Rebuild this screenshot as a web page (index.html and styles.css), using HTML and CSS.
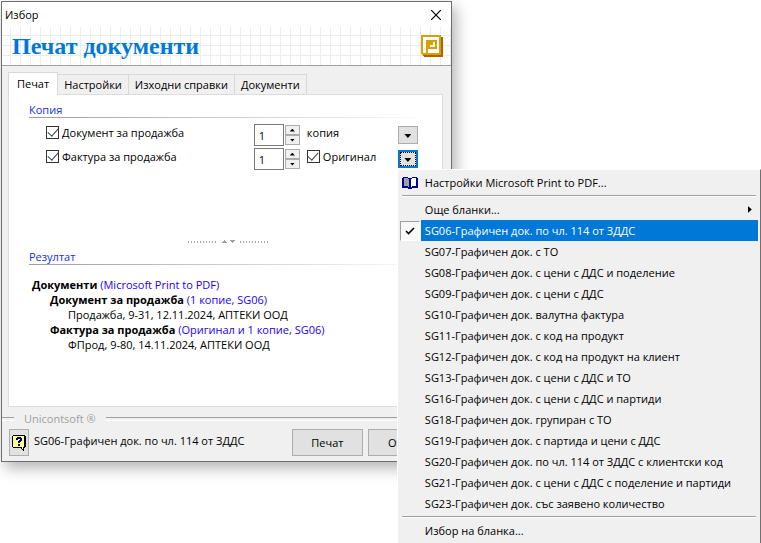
FILE: index.html
```html
<!DOCTYPE html>
<html lang="bg">
<head>
<meta charset="utf-8">
<title>Избор</title>
<link rel="stylesheet" href="styles.css">
</head>
<body>
<main class="dialog">
  <header class="titlebar">
    <span>Избор</span>
    <button class="close" type="button" aria-label="Затвори"><svg width="10" height="10" viewBox="0 0 10 10"><path d="M0 0L10 10M10 0L0 10" stroke="#000" stroke-width="1.2" fill="none"/></svg></button>
  </header>
  <div class="banner">
    <h1>Печат документи</h1>
    <svg width="22" height="22" viewBox="0 0 22 22" shape-rendering="crispEdges"><path d="M2 2H22V22H3L2 20Z" fill="#b06000"/><path d="M0 0H19L20 1V20H1L0 19Z" fill="#d8a000"/><path fill="#fff" d="M2 2H18V18H2Z"/><path fill="#d8a000" d="M5 5H16V14H7V18H5Z"/><path fill="#fff" d="M7 7H14V12H7Z"/><path fill="#d8a000" d="M7 7H12V10H9V12H7Z"/></svg>
  </div>
  <div class="body">
    <nav class="tabs">
      <button class="tab active" type="button">Печат</button>
      <button class="tab" type="button">Настройки</button>
      <button class="tab" type="button">Изходни справки</button>
      <button class="tab" type="button">Документи</button>
    </nav>
    <section class="panel">
      <h2>Копия</h2>
      <div class="copies">
        <div class="row">
          <label class="check doc"><input type="checkbox" checked>Документ за продажба</label>
          <div class="spin">
            <input type="text" value="1" aria-label="Брой копия на документа">
            <span class="arrows"><button type="button" aria-label="Повече"><i class="up"></i></button><button type="button" aria-label="По-малко"><i class="down"></i></button></span>
          </div>
          <span class="kind">копия</span>
          <div class="drop"><button class="dropbtn" type="button" aria-label="Бланка за документа"><i class="arrow"></i></button></div>
        </div>
        <div class="row">
          <label class="check doc"><input type="checkbox" checked>Фактура за продажба</label>
          <div class="spin">
            <input type="text" value="1" aria-label="Брой копия на фактурата">
            <span class="arrows"><button type="button" aria-label="Повече"><i class="up"></i></button><button type="button" aria-label="По-малко"><i class="down"></i></button></span>
          </div>
          <label class="check kind"><input type="checkbox" checked>Оригинал</label>
          <div class="drop">
            <button class="dropbtn focused" type="button" aria-label="Бланка за фактурата"><i class="arrow"></i></button>
            <div class="menu" role="menu">
              <button type="button" role="menuitem"><svg class="lead" width="16" height="12" viewBox="0 0 16 12" shape-rendering="crispEdges"><path d="M1 0H6V1H8V11H6V10H1Z" fill="#a0a0a0"/><path d="M8 1H10V0H15V10H10V11H8Z" fill="#fff"/><path d="M1 0H6V1H10V0H15V1H16V11H10V12H6V11H0V1H1ZM2 1V9H6V10H7V2H6V1ZM10 1V2H9V10H10V9H14V1Z" fill="#0000a0" fill-rule="evenodd"/></svg><span>Настройки Microsoft Print to PDF...</span></button>
              <hr>
              <button type="button" role="menuitem"><span>Още бланки...</span><i class="sub"></i></button>
              <button type="button" role="menuitem" class="selected"><b class="lead tick"><svg width="10" height="8" viewBox="0 0 10 8"><path d="M1 4L3.5 6.5L9 1" fill="none" stroke="#000" stroke-width="1.6"/></svg></b><span>SG06-Графичен док. по чл. 114 от ЗДДС</span></button>
              <button type="button" role="menuitem"><span>SG07-Графичен док. с ТО</span></button>
              <button type="button" role="menuitem"><span>SG08-Графичен док. с цени с ДДС и поделение</span></button>
              <button type="button" role="menuitem"><span>SG09-Графичен док. с цени с ДДС</span></button>
              <button type="button" role="menuitem"><span>SG10-Графичен док. валутна фактура</span></button>
              <button type="button" role="menuitem"><span>SG11-Графичен док. с код на продукт</span></button>
              <button type="button" role="menuitem"><span>SG12-Графичен док. с код на продукт на клиент</span></button>
              <button type="button" role="menuitem"><span>SG13-Графичен док. с цени с ДДС и ТО</span></button>
              <button type="button" role="menuitem"><span>SG16-Графичен док. с цени с ДДС и партиди</span></button>
              <button type="button" role="menuitem"><span>SG18-Графичен док. групиран с ТО</span></button>
              <button type="button" role="menuitem"><span>SG19-Графичен док. с партида и цени с ДДС</span></button>
              <button type="button" role="menuitem"><span>SG20-Графичен док. по чл. 114 от ЗДДС с клиентски код</span></button>
              <button type="button" role="menuitem"><span>SG21-Графичен док. с цени с ДДС с поделение и партиди</span></button>
              <button type="button" role="menuitem"><span>SG23-Графичен док. със заявено количество</span></button>
              <hr>
              <button type="button" role="menuitem"><span>Избор на бланка...</span></button>
            </div>
          </div>
        </div>
      </div>
      <div class="splitter"><i class="dots"></i><svg width="13" height="3" viewBox="0 0 13 3" shape-rendering="crispEdges"><path d="M2 0H3V1H4V2H5V3H0V2H1V1H2ZM8 0H13V1H12V2H11V3H10V2H9V1H8Z" fill="#a0a0a0"/></svg><i class="dots"></i></div>
      <h2>Резултат</h2>
      <ul class="tree">
        <li><b>Документи</b> <em>(Microsoft Print to PDF)</em>
          <ul>
            <li><b>Документ за продажба</b> <em>(1 копие, SG06)</em>
              <ul><li>Продажба, 9-31, 12.11.2024, АПТЕКИ ООД</li></ul>
            </li>
            <li><b>Фактура за продажба</b> <em>(Оригинал и 1 копие, SG06)</em>
              <ul><li>ФПрод, 9-80, 14.11.2024, АПТЕКИ ООД</li></ul>
            </li>
          </ul>
        </li>
      </ul>
    </section>
  </div>
  <div class="brand"><span>Unicontsoft ®</span></div>
  <footer class="actions">
    <button class="btn help" type="button" aria-label="Помощ"><svg width="14" height="16" viewBox="0 0 14 16" shape-rendering="crispEdges"><path d="M1 0H13V1H14V12H13V13H12V16H11V15H10V14H9V13H1V12H0V1H1Z" fill="#000"/><path d="M1 1H12V12H11V14H10V12H1Z" fill="#ffff90"/><path d="M4 3H5V2H9V3H10V6H9V7H8V8H6V6H7V5H8V4H6V5H4ZM6 9H8V11H6Z" fill="#000080"/></svg></button>
    <span class="status">SG06-Графичен док. по чл. 114 от ЗДДС</span>
    <button class="btn" type="button">Печат</button>
    <button class="btn" type="button">Отказ</button>
  </footer>
</main>
</body>
</html>
```
FILE: styles.css
```css
* { box-sizing: border-box; }

body {
  margin: 0;
  padding: 1px;
  min-height: 100vh;
  background: #fff;
  color: #000;
  font: 11px/16px "Open Sans", "Noto Sans", sans-serif;
}

button, input { font: inherit; color: inherit; border-radius: 0; margin: 0; }
button { padding: 0; border: 0; background: none; }
h1, h2, ul { margin: 0; padding: 0; }
ul { list-style: none; }
svg { display: block; }

.dialog {
  width: 59.4%;
  background: #f0f0f0;
  border: 1px solid #6e6e6e;
  box-shadow: 4px 6px 14px rgba(0, 0, 0, .3);
}

.titlebar {
  display: flex;
  align-items: center;
  justify-content: space-between;
  height: 25px;
  padding: 0 10px 0 3px;
  background: #fff;
}

.banner {
  display: flex;
  align-items: center;
  justify-content: space-between;
  height: 39px;
  padding: 0 8px 0 10px;
  border-bottom: 1px solid #a0a0a0;
  background:
    linear-gradient(90deg, #ececec 1px, transparent 1px) 8px 0 / 10px 10px,
    linear-gradient(#ececec 1px, #fff 1px) 0 8px / 10px 10px;
}

.banner h1 {
  color: #0078d7;
  font: bold 24px/38px "Liberation Serif", serif;
}

.body { padding: 6px 8px 0 6px; }

.tabs { display: flex; align-items: flex-end; }

.tab {
  height: 20px;
  padding: 0 6px;
  border: 1px solid #d9d9d9;
  border-bottom: 0;
  border-left-width: 0;
}

.tab.active {
  height: 23px;
  margin-bottom: -1px;
  padding: 0 8px;
  border-left-width: 1px;
  background: #fff;
  position: relative;
}

.panel {
  padding: 7px 8px 54px 20px;
  border: 1px solid #dcdcdc;
  background: #fff;
}

h2 {
  color: #1030e8;
  font-size: 11px;
  line-height: 15px;
  font-weight: 400;
  border-bottom: 1px solid;
  border-image: linear-gradient(90deg, #9c9ca4, #fff) 1;
}

.copies { padding: 5px 16px 0 17px; }

.row { display: flex; align-items: center; height: 24px; }

.check { display: flex; align-items: center; gap: 3px; }

.check input {
  appearance: none;
  display: grid;
  place-items: center;
  flex: none;
  width: 13px;
  height: 13px;
  border: 1px solid #333;
  background: #fff;
}

.check input:checked::before {
  content: "";
  width: 9px;
  height: 5px;
  margin-bottom: 3px;
  border: solid #444;
  border-width: 0 0 1px 1px;
  transform: rotate(-48deg);
}

.doc { flex: 1; }

.doc, .kind { margin-bottom: 5px; }

.spin { display: flex; align-items: center; gap: 1px; }

.spin input {
  width: 30px;
  height: 22px;
  padding: 0 4px;
  border: 1px solid #7a7a7a;
  background: #fff;
}

.arrows { display: grid; }

.arrows button {
  display: grid;
  place-items: center;
  width: 15px;
  height: 10px;
  border: 1px solid #adadad;
  background: #f0f0f0;
}

.up, .down, .arrow {
  width: 5px;
  height: 3px;
  background: #000;
  clip-path: polygon(0 0, 100% 0, 50% 100%);
}

.up { clip-path: polygon(50% 0, 100% 100%, 0 100%); }
.arrow { width: 7px; height: 4px; }

.kind { width: 91px; margin-left: 7px; }

.drop { position: relative; }

.dropbtn {
  display: grid;
  place-items: center;
  width: 20px;
  height: 18px;
  padding-top: 2px;
  border: 1px solid #adadad;
  background: #e1e1e1;
}

.dropbtn.focused {
  border: 2px solid #0078d7;
  outline: 1px dotted #000;
  outline-offset: -3px;
}

.menu {
  position: absolute;
  z-index: 2;
  top: 100%;
  left: -1px;
  min-width: 364px;
  margin-top: 1px;
  padding: 2px;
  border: 1px solid;
  border-color: #fff #707070 #a0a0a0 #fff;
  background: #f0f0f0;
}

.menu button {
  display: flex;
  align-items: center;
  position: relative;
  width: 100%;
  height: 21px;
  padding-left: 21px;
  white-space: nowrap;
}

.menu button span {
  flex: 1;
  padding-left: 4px;
  text-align: left;
  line-height: 21px;
}

.menu .lead { position: absolute; left: 2px; }

.menu .tick {
  display: grid;
  place-items: center;
  left: 0;
  width: 20px;
  height: 20px;
  border: 1px solid;
  border-color: #a0a0a0 #fff #fff #a0a0a0;
  background: #f8f8f8;
}

.selected span { background: #0078d7; color: #fff; }

.sub {
  width: 4px;
  height: 7px;
  margin-right: 6px;
  background: #000;
  clip-path: polygon(0 0, 100% 50%, 0 100%);
}

.menu hr {
  height: 2px;
  margin: 2px;
  border: 0;
  border-top: 1px solid #a0a0a0;
  border-bottom: 1px solid #fff;
}

.splitter {
  display: flex;
  align-items: center;
  justify-content: center;
  gap: 5px;
  height: 3px;
  margin: 69px 6px 6px 0;
}

.dots {
  width: 29px;
  height: 2px;
  background: repeating-linear-gradient(90deg, #a8a8a8 0 1px, #fff 1px 3px);
}

.tree { padding: 12px 3px 0; line-height: 15px; white-space: nowrap; }
.tree ul { padding-left: 18px; }
.tree em { color: #2000ff; font-style: normal; }

.brand {
  display: flex;
  align-items: center;
  gap: 10px;
  height: 20px;
  margin-top: 2px;
  color: #a0a0a0;
}

.brand::before, .brand::after {
  content: "";
  width: 12px;
  height: 2px;
  border-top: 1px solid #a0a0a0;
  border-bottom: 1px solid #fff;
}

.brand::after { flex: 1; }

.actions {
  display: flex;
  align-items: center;
  gap: 5px;
  padding: 0 12px 5px 7px;
}

.status { flex: 1; padding-bottom: 3px; }

.btn {
  width: 71px;
  height: 27px;
  border: 1px solid #adadad;
  background: #e1e1e1;
}

.help { display: grid; place-items: center; width: 20px; }
```
